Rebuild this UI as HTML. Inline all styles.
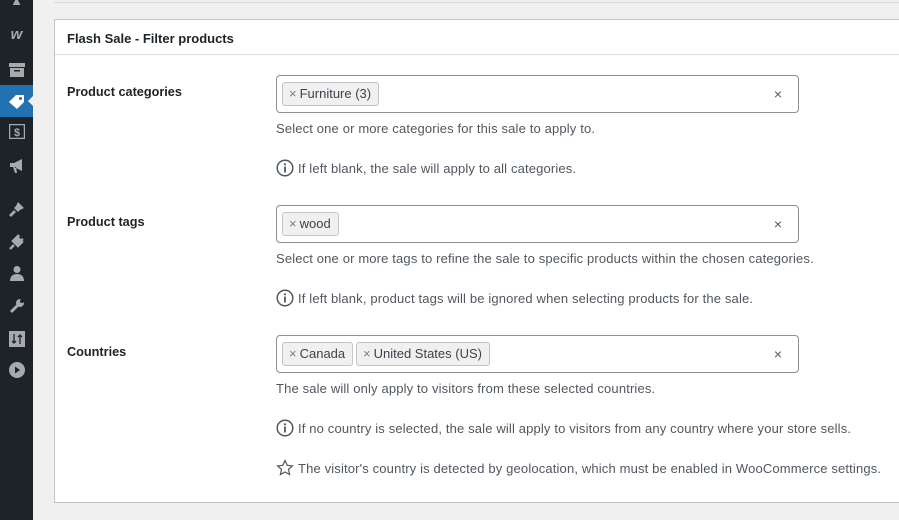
<!DOCTYPE html>
<html><head><style>
*{box-sizing:border-box;margin:0;padding:0}
body{width:899px;height:520px;overflow:hidden;background:#f0f0f1;font-family:"Liberation Sans",sans-serif;font-size:13px;color:#1d2327;position:relative}
#sb{position:absolute;left:0;top:0;width:33px;height:520px;background:#1d2327}
.ic{position:absolute;left:8px;width:17px;height:17px;display:flex;align-items:center;justify-content:center;color:#a7aaad}
#act{position:absolute;left:0;top:85px;width:33px;height:32px;background:#2271b1}
#act:after{content:"";position:absolute;right:0;top:11px;border:5px solid transparent;border-right-color:#f0f0f1}
#topbar{position:absolute;left:54px;top:0;right:0;height:3px;border-bottom:1px solid #dcdcde}
#panel{position:absolute;left:54px;top:19px;width:860px;height:484px;background:#fff;border:1px solid #c3c4c7}
#hd{height:35px;border-bottom:1px solid #dcdcde;padding:11px 12px;font-weight:bold;font-size:13px}
.lbl{position:absolute;left:12px;font-weight:bold;font-size:12.7px}
.inp{position:absolute;left:221px;width:523px;height:38px;border:1px solid #8c8f94;border-radius:4px}
.inp .x{position:absolute;right:16px;top:10px;color:#50575e;font-size:14px}
.chip{position:absolute;top:6px;height:24px;background:#f0f0f1;border:1px solid #c3c4c7;border-radius:3px;padding:3px 7px 0 6px;font-size:13px;color:#3c434a}
.chip b{font-weight:normal;color:#787c82;margin-right:3px}
.h{position:absolute;left:221px;color:#50575e;font-size:13px;letter-spacing:0.15px;white-space:nowrap}
.h svg{vertical-align:-4px;margin-right:4px}
</style></head><body>
<div id="sb">
<div class="ic" style="top:-8px">▲</div>
<div class="ic" style="top:26px;color:#a7aaad;font-weight:bold;font-style:italic;font-size:15px">w</div>
<div class="ic" style="top:61px"><svg width="16" height="14"><rect x="0" y="0" width="16" height="4" fill="#a7aaad"/><rect x="1" y="5" width="14" height="9" fill="#a7aaad"/><rect x="5" y="7" width="6" height="1.5" fill="#1d2327"/></svg></div>
<div id="act"></div>
<div class="ic" style="top:93px"><svg width="17" height="15"><path d="M1 8 L8 1 L16 1 L16 8 L9 15 Z" fill="#fff"/><circle cx="12.5" cy="4.5" r="1.5" fill="#2271b1"/></svg></div>
<div class="ic" style="top:123px"><svg width="16" height="15"><rect x="0.5" y="0.5" width="15" height="14" fill="none" stroke="#a7aaad" stroke-width="1.5"/><text x="5" y="12" font-size="11" font-weight="bold" fill="#a7aaad" font-family="Liberation Sans">$</text></svg></div>
<div class="ic" style="top:157px"><svg width="16" height="16"><path d="M1 5h4l8-4v12l-8-4H1z M4 9l2 6h2l-1-6z" fill="#a7aaad"/></svg></div>
<div class="ic" style="top:200px"><svg width="16" height="16"><path d="M9 1l6 6-4 2-4-4z M7 5l4 4-2 2-4-4z M5 9l2 2-5 5-2-2z" fill="#a7aaad"/></svg></div>
<div class="ic" style="top:233px"><svg width="16" height="16"><path d="M8 3l5 5-4 4-5-5z M10 1l-2 3 M14 5l-3 2 M5 11l-4 4" stroke="#a7aaad" stroke-width="2.5" fill="#a7aaad"/></svg></div>
<div class="ic" style="top:264px"><svg width="16" height="16"><circle cx="8" cy="4.5" r="3.5" fill="#a7aaad"/><path d="M1 16c0-5 3-7 7-7s7 2 7 7z" fill="#a7aaad"/></svg></div>
<div class="ic" style="top:297px"><svg width="16" height="16"><path d="M2 14l7-7" stroke="#a7aaad" stroke-width="3"/><circle cx="11" cy="5" r="4" fill="#a7aaad"/><circle cx="13" cy="3" r="2" fill="#1d2327"/></svg></div>
<div class="ic" style="top:330px"><svg width="16" height="16"><rect width="16" height="16" fill="#a7aaad"/><path d="M5 3v9M3 10l2 2 2-2M11 13V4M9 6l2-2 2 2" stroke="#1d2327" stroke-width="1.3" fill="none"/></svg></div>
<div class="ic" style="top:361px"><svg width="16" height="16"><circle cx="8" cy="8" r="8" fill="#a7aaad"/><path d="M6 4.5l5 3.5-5 3.5z" fill="#1d2327"/></svg></div>
</div>
<div id="topbar"></div>
<div id="panel">
<div id="hd">Flash Sale - Filter products</div>
<div class="lbl" style="top:65px">Product categories</div>
<div class="inp" style="top:55px"><div class="chip" style="left:5px"><b>×</b>Furniture (3)</div><span class="x">×</span></div>
<div class="h" style="top:101px">Select one or more categories for this sale to apply to.</div>
<div class="h" style="top:139px"><svg width="18" height="18"><circle cx="9" cy="9" r="7.8" fill="none" stroke="#50575e" stroke-width="1.5"/><circle cx="9" cy="5.3" r="1.1" fill="#50575e"/><rect x="8.1" y="7.5" width="1.8" height="6" fill="#50575e"/></svg>If left blank, the sale will apply to all categories.</div>
<div class="lbl" style="top:195px">Product tags</div>
<div class="inp" style="top:185px"><div class="chip" style="left:5px"><b>×</b>wood</div><span class="x">×</span></div>
<div class="h" style="top:231px">Select one or more tags to refine the sale to specific products within the chosen categories.</div>
<div class="h" style="top:269px"><svg width="18" height="18"><circle cx="9" cy="9" r="7.8" fill="none" stroke="#50575e" stroke-width="1.5"/><circle cx="9" cy="5.3" r="1.1" fill="#50575e"/><rect x="8.1" y="7.5" width="1.8" height="6" fill="#50575e"/></svg>If left blank, product tags will be ignored when selecting products for the sale.</div>
<div class="lbl" style="top:325px">Countries</div>
<div class="inp" style="top:315px"><div class="chip" style="left:5px"><b>×</b>Canada</div><div class="chip" style="left:79px"><b>×</b>United States (US)</div><span class="x">×</span></div>
<div class="h" style="top:361px">The sale will only apply to visitors from these selected countries.</div>
<div class="h" style="top:399px"><svg width="18" height="18"><circle cx="9" cy="9" r="7.8" fill="none" stroke="#50575e" stroke-width="1.5"/><circle cx="9" cy="5.3" r="1.1" fill="#50575e"/><rect x="8.1" y="7.5" width="1.8" height="6" fill="#50575e"/></svg>If no country is selected, the sale will apply to visitors from any country where your store sells.</div>
<div class="h" style="top:439px"><svg width="18" height="18"><path d="M9 1.5l2.2 4.8 5.2.6-3.9 3.5 1.1 5.2L9 13l-4.6 2.6 1.1-5.2L1.6 6.9l5.2-.6z" fill="none" stroke="#50575e" stroke-width="1.2"/></svg>The visitor's country is detected by geolocation, which must be enabled in WooCommerce settings.</div>
</div>
</body></html>
